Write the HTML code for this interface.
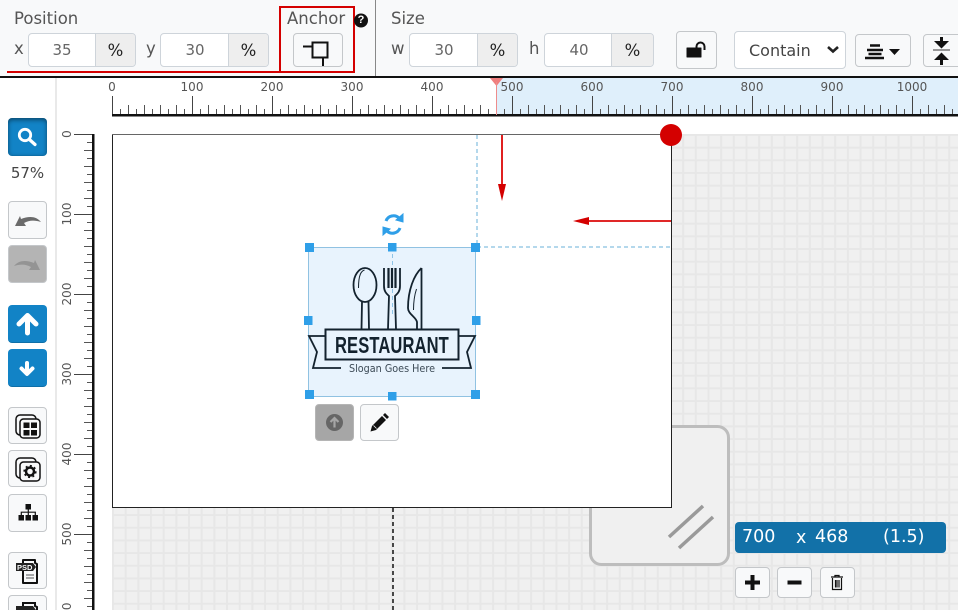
<!DOCTYPE html>
<html>
<head>
<meta charset="utf-8">
<style>
html,body{margin:0;padding:0;width:958px;height:610px;overflow:hidden;background:#fff;font-family:"DejaVu Sans","Liberation Sans",sans-serif;color:#555}
#root{position:absolute;left:0;top:0;width:958px;height:610px;overflow:hidden}
.a{position:absolute;box-sizing:border-box}
.lbl{position:absolute;font-size:16.5px;color:#555;line-height:18px;white-space:nowrap}
.grp{position:absolute;top:33px;height:34px;border:1px solid #ced4da;border-radius:4px;background:#fff;box-sizing:border-box;overflow:hidden}
.grp .v{position:absolute;left:0;top:0;bottom:0;text-align:center;font-size:15px;line-height:33px;color:#666;width:66px}
.grp .p{position:absolute;right:0;top:0;bottom:0;width:40px;background:#eeeeee;border-left:1px solid #ced4da;text-align:center;font-size:16.5px;line-height:33px;color:#222;box-sizing:border-box}
.btn{position:absolute;box-sizing:border-box;border:1px solid #c4c7ca;border-radius:4px;background:#f8f9fa;display:block}
.blue{background:#1283c6;border:none;border-bottom:1px solid #0e6fa8}
svg{position:absolute;left:0;top:0;overflow:visible}
.dim{position:absolute;top:527px;font-size:17.5px;line-height:21px;color:#fff;white-space:nowrap}
</style>
</head>
<body>
<div id="root">
<!-- toolbar -->
<div class="a" style="left:0;top:0;width:958px;height:76px;background:#f8f9fa"></div>
<div class="a" style="left:0;top:76px;width:958px;height:2px;background:#111"></div>
<div class="a" style="left:375px;top:0;width:1px;height:76px;background:#888"></div>

<div class="lbl" style="left:14px;top:10px">Position</div>
<div class="lbl" style="left:14px;top:40px">x</div>
<div class="grp" style="left:28px;width:108px"><div class="v">35</div><div class="p">%</div></div>
<div class="lbl" style="left:146px;top:40px">y</div>
<div class="grp" style="left:160px;width:109px"><div class="v" style="width:68px">30</div><div class="p">%</div></div>

<div class="a" style="left:7px;top:71px;width:273px;height:2px;background:#d40000"></div>
<div class="a" style="left:279px;top:6px;width:76px;height:67px;border:2px solid #d40000"></div>
<div class="lbl" style="left:287px;top:10px">Anchor</div>
<div class="btn" style="left:293px;top:33px;width:50px;height:34px"></div>
<svg width="958" height="76" style="height:76px">
  <path d="M303 46.500h9M312.500 42.500h15v15h-15zM323 58v8" fill="none" stroke="#111" stroke-width="2"/>
  <circle cx="361" cy="20.500" r="7" fill="#111"/>
</svg>
<div class="a" style="left:355px;top:13px;width:12px;text-align:center;font:bold 11px/15px 'Liberation Sans',sans-serif;color:#fff">?</div>

<div class="lbl" style="left:391px;top:10px">Size</div>
<div class="lbl" style="left:391px;top:40px">w</div>
<div class="grp" style="left:409px;width:109px"><div class="v" style="width:68px">30</div><div class="p">%</div></div>
<div class="lbl" style="left:529px;top:40px">h</div>
<div class="grp" style="left:544px;width:110px"><div class="v" style="width:68px">40</div><div class="p" style="width:42px">%</div></div>

<div class="btn" style="left:676px;top:31px;width:41px;height:38px"></div>
<div class="a" style="left:734px;top:31px;width:112px;height:38px;background:#fff;border:1px solid #ced4da;border-radius:4px"></div>
<div class="lbl" style="left:749px;top:42px;color:#444;font-size:16px">Contain</div>
<div class="btn" style="left:855px;top:34px;width:56px;height:33px"></div>
<div class="btn" style="left:923px;top:34px;width:40px;height:33px"></div>
<svg width="958" height="76" style="height:76px">
  <path d="M687 48h14v9h-14z" fill="#111" stroke="#111" stroke-width="1" stroke-linejoin="round"/>
  <path d="M696.500 48v-1.500a4 4 0 0 1 8 0V50" fill="none" stroke="#111" stroke-width="2"/>
  <path d="M828 47l5 4.500 5-4.500" fill="none" stroke="#222" stroke-width="2.600"/>
  <path d="M870 45.500h10M867 50h16M868.500 54h13M865 58h19" stroke="#111" stroke-width="2.400"/>
  <path d="M889 49h11l-5.500 6z" fill="#111"/>
  <path d="M933 50h17" stroke="#777" stroke-width="1.500"/>
  <path d="M941.500 37v6M941.500 57v8" stroke="#111" stroke-width="3"/>
  <path d="M934 41h15l-7.500 7.500zM934 60h15l-7.500-7.500z" fill="#111"/>
</svg>

<!-- ruler -->
<div class="a" style="left:497px;top:78px;width:461px;height:37px;background:#dfeffb"></div>
<div class="a" style="left:0;top:78px;width:55px;height:532px;background:#fff;border-right:2px solid #e9e9e9;box-sizing:content-box"></div>

<svg width="958" height="610" style="height:610px;width:958px">
 <defs>
  <pattern id="hr" x="112" y="96" width="80" height="20" patternUnits="userSpaceOnUse">
    <path d="M.5 0v20" stroke="#444" stroke-width="1"/>
    <path d="M8.500 13v7M24.500 13v7M40.500 13v7M56.500 13v7M72.500 13v7" stroke="#555" stroke-width="1"/>
    <path d="M16.500 9v11M32.500 9v11M48.500 9v11M64.500 9v11" stroke="#555" stroke-width="1"/>
  </pattern>
  <pattern id="vr" x="74" y="134" width="20" height="80" patternUnits="userSpaceOnUse">
    <path d="M0 .5h20" stroke="#444" stroke-width="1"/>
    <path d="M13 8.500h7M13 24.500h7M13 40.500h7M13 56.500h7M13 72.500h7" stroke="#555" stroke-width="1"/>
    <path d="M10 16.500h10M10 32.500h10M10 48.500h10M10 64.500h10" stroke="#555" stroke-width="1"/>
  </pattern>
  <pattern id="gr" x="112" y="134" width="12.67" height="12.67" patternUnits="userSpaceOnUse">
    <rect width="12.67" height="12.67" fill="#f0f0f0"/>
    <path d="M0 0h12.67v2H0zM0 0h2v12.67H0z" fill="#e7e7e7"/>
  </pattern>
 </defs>
 <rect x="112" y="96" width="846" height="18" fill="url(#hr)"/>
 <rect x="112" y="114" width="846" height="2.500" fill="#111"/>
 <rect x="74" y="134" width="18" height="476" fill="url(#vr)"/>
 <rect x="92" y="134" width="2.500" height="476" fill="#111"/>
 <rect x="112" y="134" width="846" height="476" fill="url(#gr)"/>
 <path d="M490 78h13l-6.500 8z" fill="#ef7f7f"/>
 <path d="M496.500 82v33" stroke="#ee8c8c" stroke-width="1"/>
 <g font-family="'DejaVu Sans',sans-serif" font-size="12" fill="#555" text-anchor="middle">
  <text x="112" y="91">0</text><text x="192" y="91">100</text><text x="272" y="91">200</text><text x="352" y="91">300</text><text x="432" y="91">400</text><text x="512" y="91">500</text><text x="592" y="91">600</text><text x="672" y="91">700</text><text x="752" y="91">800</text><text x="832" y="91">900</text><text x="912" y="91">1000</text>
  <text transform="translate(71 134) rotate(-90)">0</text>
  <text transform="translate(71 214) rotate(-90)">100</text>
  <text transform="translate(71 294) rotate(-90)">200</text>
  <text transform="translate(71 374) rotate(-90)">300</text>
  <text transform="translate(71 454) rotate(-90)">400</text>
  <text transform="translate(71 534) rotate(-90)">500</text>
  <text transform="translate(71 614) rotate(-90)">600</text>
 </g>

 <!-- back panel -->
 <rect x="590.500" y="426.500" width="138" height="138" rx="11" fill="#f0f0f0" stroke="#bdbdbd" stroke-width="3"/>
 <path d="M669 537l34-31M679 548l34-31" stroke="#9a9a9a" stroke-width="3.500"/>

 <!-- canvas -->
 <rect x="112.500" y="134.500" width="559" height="373" fill="#fff" stroke="#222" stroke-width="1"/>
 <path d="M112 134.500h559" stroke="#666" stroke-width="1"/>
 <path d="M393 508v102" stroke="#111" stroke-width="1.500" stroke-dasharray="4 3"/>
 <path d="M477 135v112M477 247h194" stroke="#9ccbe6" stroke-width="1.500" stroke-dasharray="4 3"/>
 <circle cx="671" cy="135" r="11" fill="#d40000"/>
 <path d="M502 135v50" stroke="#e02020" stroke-width="2"/>
 <path d="M498 184h8l-4 17z" fill="#d40000"/>
 <path d="M671 221h-82" stroke="#e02828" stroke-width="2"/>
 <path d="M589 217v8l-16-4z" fill="#d40000"/>

 <!-- selection -->
 <rect x="308.500" y="247.500" width="167" height="149" fill="#e8f3fd" stroke="#90c2e2" stroke-width="1"/>
 <path d="M392.500 247v70" stroke="#8ec3e6" stroke-width="1" stroke-dasharray="4 3"/>

 <!-- logo -->
 <g fill="none" stroke="#13222e" stroke-width="1.800">
  <ellipse cx="365" cy="285" rx="11.500" ry="17"/>
  <path d="M358.500 288c0-14 3-17 6-18" stroke-width="1"/>
  <path d="M362 302l-.5 27M368.500 302l.5 27"/>
  <path d="M384 268v18c0 6 3 8 5 10l-1 33M400 268v18c0 6-3 8-5 10l1 33"/>
  <path d="M388.500 268v20M392 268v20M395.500 268v20" stroke-width="2.200"/>
  <path d="M421.500 268v61M417 329v-7c-1-5-9-8-9-14 0-18 6-33 13.500-40"/>
  <path d="M413.500 310c0-8 1-15 3-21" stroke-width="1"/>
  <rect x="325.500" y="329.500" width="133" height="30" stroke-width="2"/>
  <path d="M325 336h-16l8 16-4 16h28M458 336h17l-8 16 4 16h-29" stroke-width="1.800"/>
 </g>
 <text transform="translate(335 353) scale(.72 1)" font-family="'Liberation Sans',sans-serif" font-weight="bold" font-size="23" fill="#13222e" textLength="158" lengthAdjust="spacing">RESTAURANT</text>
 <text x="349" y="372" font-family="'DejaVu Sans',sans-serif" font-size="10.500" fill="#3c4a56" textLength="86" lengthAdjust="spacingAndGlyphs">Slogan Goes Here</text>

 <!-- handles -->
 <g fill="#2f9fe8">
  <rect x="305" y="243" width="9" height="9"/><rect x="388" y="243" width="8.500" height="8.500"/><rect x="471" y="243" width="9" height="9"/>
  <rect x="304" y="316" width="8.500" height="9"/><rect x="472" y="316" width="8.500" height="9"/>
  <rect x="305" y="390" width="9" height="9"/><rect x="388" y="392" width="8.500" height="8.500"/><rect x="471" y="390" width="9" height="9"/>
 </g>
 <!-- rotate -->
 <g fill="none" stroke="#2f9fe8" stroke-width="3">
  <path d="M386 221a8 8 0 0 1 13-3"/><path d="M400 228a8 8 0 0 1-13 3"/>
 </g>
 <path d="M396 220l7-6v8zM390 229l-7 6v-8z" fill="#2f9fe8" stroke="#2f9fe8"/>
</svg>

<!-- canvas buttons -->
<div class="btn" style="left:315px;top:404px;width:39px;height:37px;background:#a6a6a6;border-color:#b5b5b5"></div>
<div class="btn" style="left:360px;top:404px;width:39px;height:37px"></div>
<!-- left buttons -->
<div class="btn blue" style="left:8px;top:118px;width:39px;height:38px;box-shadow:inset 0 2px 5px rgba(0,0,0,.45)"></div>
<div class="a" style="left:0;top:164px;width:55px;text-align:center;font-size:15px;line-height:18px;color:#444">57%</div>
<div class="btn" style="left:8px;top:201px;width:39px;height:38px"></div>
<div class="btn" style="left:8px;top:245px;width:39px;height:38px;background:#b4b4b4"></div>
<div class="btn blue" style="left:8px;top:305px;width:39px;height:38px"></div>
<div class="btn blue" style="left:8px;top:349px;width:39px;height:38px"></div>
<div class="btn" style="left:8px;top:407px;width:39px;height:37px"></div>
<div class="btn" style="left:8px;top:450px;width:39px;height:37px"></div>
<div class="btn" style="left:8px;top:494px;width:39px;height:38px"></div>
<div class="btn" style="left:8px;top:552px;width:39px;height:37px"></div>
<div class="btn" style="left:8px;top:595px;width:39px;height:37px"></div>

<!-- dim box -->
<div class="a" style="left:735px;top:522px;width:211px;height:31px;background:#1271a8;border-radius:4px"></div>
<div class="dim" style="left:742px">700</div>
<div class="dim" style="left:796px;top:528px">x</div>
<div class="dim" style="left:815px">468</div>
<div class="dim" style="left:883px">(1.5)</div>
<div class="btn" style="left:735px;top:567px;width:35px;height:31px"></div>
<div class="btn" style="left:777px;top:567px;width:35px;height:31px"></div>
<div class="btn" style="left:820px;top:567px;width:35px;height:31px"></div>

<svg width="958" height="610" style="height:610px;width:958px">
 <!-- upload/pencil -->
 <circle cx="334.500" cy="422.500" r="8.500" fill="#666"/>
 <path d="M334.500 427.500v-9M330.500 422l4-4 4 4" fill="none" stroke="#a6a6a6" stroke-width="2.200"/>
 <path d="M372 426l-1.500 5.500 5.500-1.500 10-10-4-4z" fill="#111"/>
 <path d="M383 415l2-2 4 4-2 2z" fill="#111"/>
 <path d="M373.500 425.500l3 3" stroke="#f8f9fa" stroke-width=".8"/>
 <!-- search -->
 <circle cx="25" cy="135" r="5.700" fill="none" stroke="#fff" stroke-width="2.800"/>
 <path d="M30 140l5 4.500" stroke="#fff" stroke-width="3.200" stroke-linecap="round"/>
 <!-- undo -->
 <path d="M15 226l5-10 1 3c8-3 15-3 20 3-6-2-12-2-17 1l2 3z" fill="#6b6b6b"/>
 <!-- redo -->
 <path d="M40 270l-5-10-1 3c-8-3-15-3-20 3 6-2 12-2 17 1l-2 3z" fill="#949494"/>
 <!-- up / down -->
 <path d="M27.500 333v-17M19 324l8.500-8.500L36 324" fill="none" stroke="#fff" stroke-width="5" stroke-linecap="round" stroke-linejoin="round"/>
 <path d="M27 363v10M21.500 368.500l5.500 5.500 5.500-5.500" fill="none" stroke="#fff" stroke-width="4" stroke-linecap="round" stroke-linejoin="round"/>
 <!-- grid icon -->
 <rect x="16" y="415" width="20" height="20" rx="4" fill="#f8f9fa" stroke="#111" stroke-width="1.500"/>
 <rect x="20" y="419" width="20" height="19" rx="3.500" fill="#f8f9fa" stroke="#111" stroke-width="1.500"/>
 <path d="M23.500 422.500h6v5.500h-6zM31 422.500h6v5.500h-6zM23.500 430h6v5.500h-6zM31 430h6v5.500h-6z" fill="#111"/>
 <!-- settings icon -->
 <rect x="16" y="458" width="20" height="20" rx="4" fill="#f8f9fa" stroke="#111" stroke-width="1.500"/>
 <rect x="20" y="462" width="20" height="19" rx="3.500" fill="#f8f9fa" stroke="#111" stroke-width="1.500"/>
 <circle cx="30" cy="471.500" r="4" fill="none" stroke="#111" stroke-width="2.500"/>
 <circle cx="30" cy="471.500" r="5.800" fill="none" stroke="#111" stroke-width="1.600" stroke-dasharray="2 2.500"/>
 <!-- tree -->
 <path d="M25.500 504h5.500v5.500h-5.500zM18.500 515h5.500v5.500h-5.500zM25.500 515h5.500v5.500h-5.500zM32.500 515h5.500v5.500h-5.500z" fill="#111"/>
 <path d="M28.300 509v6M21.300 515v-2.800h14V515" fill="none" stroke="#111" stroke-width="1.200"/>
 <!-- psd -->
 <path d="M23 560h12v3l2 1v19h-14z" fill="#f8f9fa" stroke="#111" stroke-width="2" stroke-linejoin="round"/>
 <path d="M16 563h17l3 4-3 4H16z" fill="#222"/>
 <text x="17" y="570" font-family="'Liberation Sans',sans-serif" font-weight="bold" font-size="7.500" fill="#f8f9fa">PSD</text>
 <path d="M26 575h8M26 578h8" stroke="#555" stroke-width="1"/>
 <path d="M23 603h12v3l2 1v19h-14z" fill="#f8f9fa" stroke="#111" stroke-width="2"/>
 <path d="M16 606h17l3 4-3 4H16z" fill="#222"/>
 <!-- plus minus trash -->
 <path d="M745 582.500h15M752.500 575v15" stroke="#111" stroke-width="4"/>
 <path d="M787.500 582.500h14" stroke="#111" stroke-width="4"/>
 <path d="M831 577h12M835 577v-1.500h4v1.500" fill="none" stroke="#111" stroke-width="1.300"/>
 <path d="M832.500 578v11.500h9V578M835.500 580v7.500M837 580v7.500M839 580v7.500" fill="none" stroke="#111" stroke-width="1.200"/>
</svg>
</div>
</body>
</html>
